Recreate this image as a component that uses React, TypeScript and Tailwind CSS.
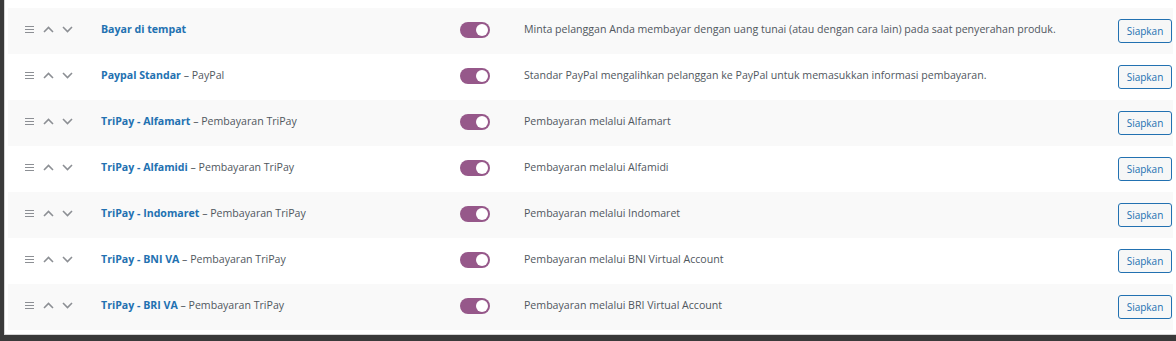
import { useState } from "react";

type Gateway = {
  name: string;
  sub?: string;
  desc: string;
};

const gateways: Gateway[] = [
  {
    name: "Bayar di tempat",
    desc: "Minta pelanggan Anda membayar dengan uang tunai (atau dengan cara lain) pada saat penyerahan produk.",
  },
  {
    name: "Paypal Standar",
    sub: "PayPal",
    desc: "Standar PayPal mengalihkan pelanggan ke PayPal untuk memasukkan informasi pembayaran.",
  },
  { name: "TriPay - Alfamart", sub: "Pembayaran TriPay", desc: "Pembayaran melalui Alfamart" },
  { name: "TriPay - Alfamidi", sub: "Pembayaran TriPay", desc: "Pembayaran melalui Alfamidi" },
  { name: "TriPay - Indomaret", sub: "Pembayaran TriPay", desc: "Pembayaran melalui Indomaret" },
  { name: "TriPay - BNI VA", sub: "Pembayaran TriPay", desc: "Pembayaran melalui BNI Virtual Account" },
  { name: "TriPay - BRI VA", sub: "Pembayaran TriPay", desc: "Pembayaran melalui BRI Virtual Account" },
];

const SortIcons = () => (
  <div className="flex items-center w-[93px] pl-[17px] gap-[9px] pb-[3px]">
    <svg width="9" height="7" viewBox="0 0 9 7" className="text-[#8c8f94]">
      <path d="M0 0.5h9M0 3.5h9M0 6.5h9" stroke="currentColor" strokeWidth="1" />
    </svg>
    <div className="flex items-center gap-[8px]">
      <svg width="11" height="7" viewBox="0 0 11 7" fill="none" className="text-[#8c8f94]">
        <path d="M1 6l4.5-4.5L10 6" stroke="currentColor" strokeWidth="1.6" />
      </svg>
      <svg width="11" height="7" viewBox="0 0 11 7" fill="none" className="text-[#8c8f94]">
        <path d="M1 1l4.5 4.5L10 1" stroke="currentColor" strokeWidth="1.6" />
      </svg>
    </div>
  </div>
);

const Toggle = ({ on, onClick }: { on: boolean; onClick: () => void }) => (
  <button
    onClick={onClick}
    className={`w-[30px] h-[16px] rounded-full flex items-center px-[2px] ${
      on ? "bg-[#96588a] justify-end" : "bg-[#ccc] justify-start"
    }`}
  >
    <span className="w-[12px] h-[12px] rounded-full bg-white"></span>
  </button>
);

export default function App() {
  const [enabled, setEnabled] = useState<boolean[]>(gateways.map(() => true));

  return (
    <div
      className="w-[1176px] h-[341px] bg-white border-l-[4px] border-b-[6px] border-[#3a3a3a] overflow-hidden"
      style={{ fontFamily: '"Open Sans", "Noto Sans", sans-serif' }}
    >
      <div className="h-full border-l border-b border-[#d6d6d6] pt-[8px] pl-[3px] pr-[3px]">
        {gateways.map((g, i) => (
          <div
            key={g.name}
            className={`h-[46px] flex items-center text-[10.6px] ${
              i % 2 === 0 ? "bg-[#f9f9f9]" : "bg-white"
            }`}
          >
            <SortIcons />
            <div className="w-[359px] text-[#50575e] pb-[3px]">
              <span className="font-bold text-[#2271b1]">{g.name}</span>
              {g.sub && <span> – {g.sub}</span>}
            </div>
            <div className="w-[64px] flex pb-[3px]">
              <Toggle
                on={enabled[i]}
                onClick={() =>
                  setEnabled(enabled.map((v, j) => (j === i ? !v : v)))
                }
              />
            </div>
            <div className="flex-1 text-[#50575e] pb-[3px]">{g.desc}</div>
            <button className="h-[24px] w-[54px] mr-[1px] border border-[#2271b1] rounded-[3px] bg-[#f6f7f7] text-[#2271b1] text-[10px]">
              Siapkan
            </button>
          </div>
        ))}
      </div>
    </div>
  );
}
